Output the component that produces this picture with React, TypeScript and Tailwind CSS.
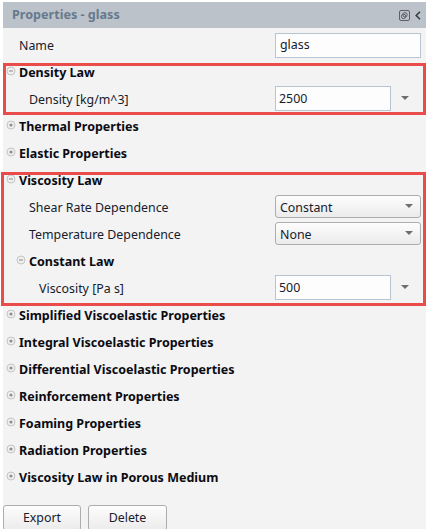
const font = "[font-family:'Noto_Sans',sans-serif]";

function Toggle({ open }: { open: boolean }) {
  return (
    <svg width="10" height="10" viewBox="0 0 10 10" className="shrink-0 -mt-1">
      <circle cx="5" cy="5" r="4" fill="#f0f0f0" stroke="#c4c4c4" />
      {open ? <rect x="3" y="4.5" width="4" height="1" fill="#8a8a8a" /> : <circle cx="5" cy="5" r="1.6" fill="#8f8f8f" />}
    </svg>
  );
}

function Arrow() {
  return (
    <svg width="8" height="4" viewBox="0 0 8 4">
      <path d="M0 0H8L4 4Z" fill="#6e6e6e" />
    </svg>
  );
}

function Section({ title, open = false, indent = 0 }: { title: string; open?: boolean; indent?: number }) {
  return (
    <div className="flex h-[27px] items-center" style={{ paddingLeft: 3 + indent }}>
      <div className="flex w-[13px] justify-start"><Toggle open={open} /></div>
      <span className="pt-[2px] text-[12.5px] font-bold text-[#0b0b12]">{title}</span>
    </div>
  );
}

function Label({ children, indent }: { children: string; indent: number }) {
  return (
    <span className="pt-[2px] text-[12.4px] text-[#16202c]" style={{ paddingLeft: indent }}>
      {children}
    </span>
  );
}

function NumberRow({ label, value, indent }: { label: string; value: string; indent: number }) {
  return (
    <div className="flex h-[27px] items-center justify-between pr-[5px]">
      <Label indent={indent}>{label}</Label>
      <div className="flex w-[146px] items-center self-start">
        <div className="flex h-[25px] w-[116px] items-center border border-[#b9c4d3] bg-[#fdfdfd] pl-[3px] pt-[1px] text-[12.4px] text-[#16202c]">{value}</div>
        <div className="ml-[10px] -mt-[2px] flex"><Arrow /></div>
      </div>
    </div>
  );
}

function SelectRow({ label, value }: { label: string; value: string }) {
  return (
    <div className="flex h-[27px] items-center justify-between pr-[5px]">
      <Label indent={26}>{label}</Label>
      <div className="mt-[1px] flex h-[23px] w-[146px] items-center justify-between self-start rounded-[3px] border border-[#adadad] bg-gradient-to-b from-[#fdfdfd] to-[#ebebeb] pl-[4px] pr-[7px] text-[12.4px] text-[#16202c]">
        <span className="pt-[4px]">{value}</span>
        <span className="-mt-[2px] flex"><Arrow /></span>
      </div>
    </div>
  );
}

function Highlight({ className, children }: { className: string; children: React.ReactNode }) {
  return (
    <div className="relative">
      {children}
      <div className={`pointer-events-none absolute border-[3px] border-[#ea4b4b] ${className}`} />
    </div>
  );
}

const rest = [
  "Simplified Viscoelastic Properties",
  "Integral Viscoelastic Properties",
  "Differential Viscoelastic Properties",
  "Reinforcement Properties",
  "Foaming Properties",
  "Radiation Properties",
  "Viscosity Law in Porous Medium",
];

export default function App() {
  return (
    <div className={`${font} h-[529px] w-[426px] overflow-hidden bg-white pl-[3px] pt-[2px]`}>
      <div className="h-[527px] bg-[#f3f3f3]">
        <div className="flex h-[26px] items-center justify-between bg-[#bcc2c9] pl-[9px] pr-[5px]">
          <span className="text-[12.6px] font-bold text-[#66798e]">Properties - glass</span>
          <div className="flex items-center gap-[5px]">
            <svg width="11" height="11" viewBox="0 0 11 11" fill="none" stroke="#5c6168">
              <rect x="0.5" y="0.5" width="10" height="10" rx="1.5" />
              <circle cx="6" cy="4.8" r="2.2" />
              <circle cx="4.6" cy="6.4" r="2.2" />
            </svg>
            <svg width="6" height="9" viewBox="0 0 6 9" fill="none" stroke="#33383e" strokeWidth="1.5">
              <path d="M5 0.8L1.2 4.5L5 8.2" />
            </svg>
          </div>
        </div>
        <div className="flex h-[31px] items-center justify-between pr-[5px] pt-[3px]">
          <Label indent={16}>Name</Label>
          <div className="flex h-[25px] w-[146px] items-center border border-[#b9c4d3] bg-[#fdfdfd] pl-[4px] pt-[1px] text-[12.4px] text-[#16202c]">glass</div>
        </div>
        <Highlight className="top-[4px] right-0 bottom-[-2px] left-0">
          <Section title="Density Law" open />
          <NumberRow label="Density [kg/m^3]" value="2500" indent={26} />
        </Highlight>
        <Section title="Thermal Properties" />
        <Section title="Elastic Properties" />
        <Highlight className="top-[5px] right-0 bottom-[-4px] left-[-2px]">
          <Section title="Viscosity Law" open />
          <SelectRow label="Shear Rate Dependence" value="Constant" />
          <SelectRow label="Temperature Dependence" value="None" />
          <Section title="Constant Law" open indent={10} />
          <NumberRow label="Viscosity [Pa s]" value="500" indent={36} />
        </Highlight>
        {rest.map((t) => (
          <Section key={t} title={t} />
        ))}
        <div className="mt-[14px] flex gap-[7px]">
          <button className="h-[26px] w-[78px] rounded-[3px] border border-[#adadad] bg-gradient-to-b from-[#fdfdfd] to-[#ebebeb] pt-[1px] text-[12.4px] text-[#16202c]">Export</button>
          <button className="h-[26px] w-[79px] rounded-[3px] border border-[#adadad] bg-gradient-to-b from-[#fdfdfd] to-[#ebebeb] pt-[1px] text-[12.4px] text-[#16202c]">Delete</button>
        </div>
      </div>
    </div>
  );
}
